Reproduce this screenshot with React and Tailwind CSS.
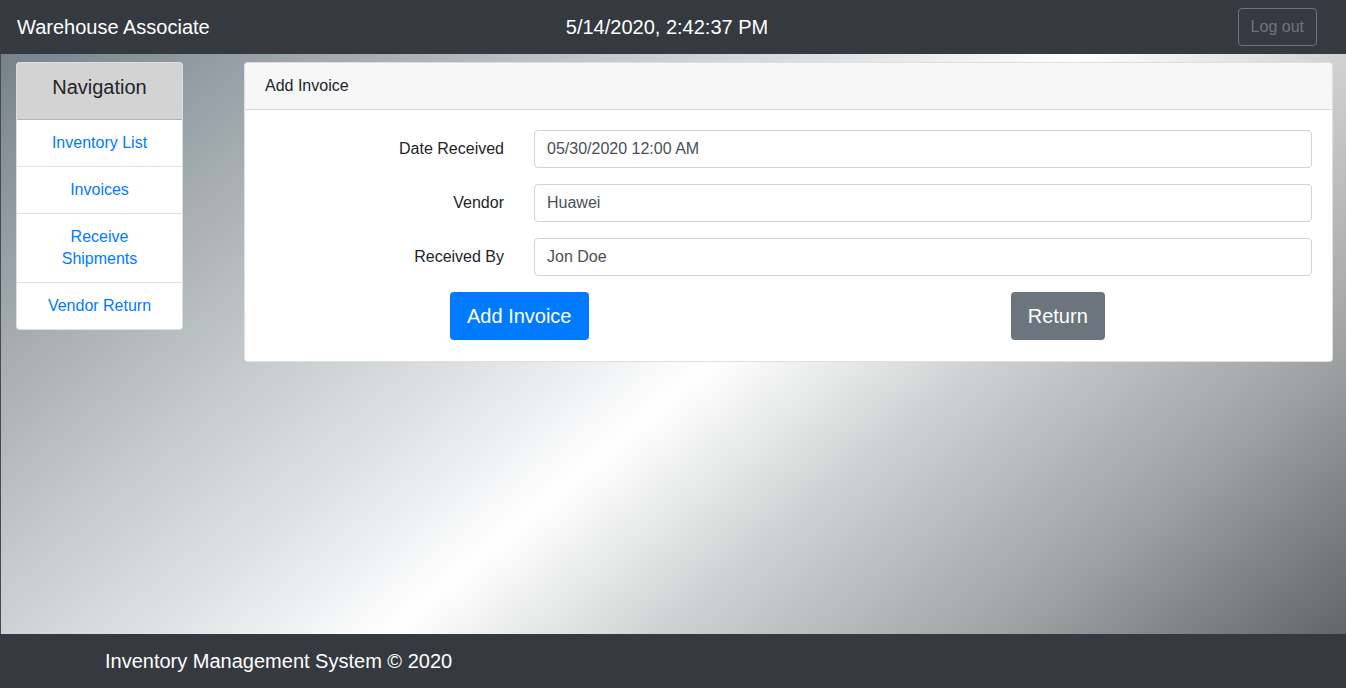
import React from "react";

const navLinks = ["Inventory List", "Invoices", "Receive Shipments", "Vendor Return"];

const fields = [
  { label: "Date Received", value: "05/30/2020 12:00 AM" },
  { label: "Vendor", value: "Huawei" },
  { label: "Received By", value: "Jon Doe" },
];

export default function App() {
  return (
    <div className="h-screen flex flex-col font-['Liberation_Sans',Arial,sans-serif] text-[#212529]">
      <header className="h-[54px] shrink-0 bg-[#343a40] flex items-center pl-[17px] pr-[29px]">
        <div className="flex-1 text-white text-[20px]">Warehouse Associate</div>
        <div className="text-white text-[20px]">5/14/2020, 2:42:37 PM</div>
        <div className="flex-1 flex justify-end">
          <button className="h-[38px] px-3 border border-[#6c757d] text-[#6c757d] rounded text-base">
            Log out
          </button>
        </div>
      </header>

      <main className="flex-1 flex items-start pt-2 pl-[15px] pr-[13px] border-l border-[#4a4a4a] bg-[linear-gradient(140deg,#76828a_0%,#a6aeb3_18%,#cdd2d5_34%,#e8eaec_45%,#ffffff_53%,#e6e7e7_60%,#d0d1d2_66%,#a0a2a4_83%,#626669_100%)]">
        <nav className="w-[167px] shrink-0 bg-white border border-black/[.125] rounded overflow-hidden">
          <div className="h-[57px] bg-[#d3d3d3] text-center pt-[10px] leading-[28px] text-[20px] border-b border-black/[.15]">
            Navigation
          </div>
          {navLinks.map((link, i) => (
            <a
              key={link}
              href="#"
              className={`block text-center text-[#007bff] text-base leading-[22px] py-3 px-4 ${
                i < navLinks.length - 1 ? "border-b border-[#dee2e6]" : ""
              }`}
            >
              {link}
            </a>
          ))}
        </nav>

        <section className="flex-1 ml-[61px] bg-white border border-black/[.125] rounded overflow-hidden">
          <div className="h-[47px] bg-[#f7f7f7] border-b border-black/[.125] flex items-center px-5 text-base">
            Add Invoice
          </div>
          <div className="px-5 pt-5 pb-[21px]">
            {fields.map((f) => (
              <div key={f.label} className="grid grid-cols-[254px_1fr] items-center mb-4">
                <label className="text-right pr-[15px] text-base">{f.label}</label>
                <input
                  readOnly
                  value={f.value}
                  className="ml-[15px] h-[38px] px-3 border border-[#ced4da] rounded text-base text-[#495057] outline-none"
                />
              </div>
            ))}
            <div className="grid grid-cols-2 -mx-[15px]">
              <div className="flex justify-center">
                <button className="h-12 px-[17px] bg-[#007bff] text-white text-[20px] rounded">
                  Add Invoice
                </button>
              </div>
              <div className="flex justify-center">
                <button className="h-12 px-[17px] bg-[#6c757d] text-white text-[20px] rounded">
                  Return
                </button>
              </div>
            </div>
          </div>
        </section>
      </main>

      <footer className="h-[54px] shrink-0 bg-[#343a40] flex items-center pl-[105px] text-white text-[20px]">
        Inventory Management System © 2020
      </footer>
    </div>
  );
}
